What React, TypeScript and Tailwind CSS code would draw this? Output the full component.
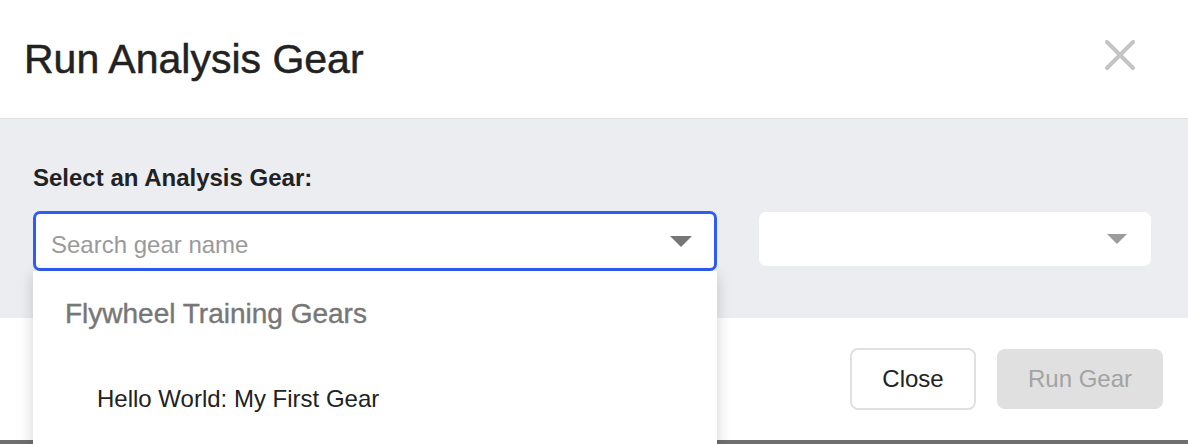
function Caret({ className }: { className: string }) {
	return (
		<svg width="22" height="11" viewBox="0 0 22 11" className={className}>
			<polygon points="0,0 22,0 11,11" fill="currentColor" />
		</svg>
	);
}

export default function App() {
	return (
		<div
			className="relative w-[1188px] h-[444px] overflow-hidden bg-white text-[#222]"
			style={{ fontFamily: '"Liberation Sans", Arial, sans-serif' }}
		>
			<div className="h-[119px] flex items-center justify-between pl-6 pr-[53px] border-b border-[#e1e1e1]">
				<h1 className="text-[41px] leading-[48px] text-[#222] [-webkit-text-stroke:0.5px_#222]">
					Run Analysis Gear
				</h1>
				<button className="mb-[8px] text-[#c4c4c4]" aria-label="Close">
					<svg width="30" height="30" viewBox="0 0 30 30">
						<path
							d="M2 2 L28 28 M28 2 L2 28"
							stroke="currentColor"
							strokeWidth="4"
							strokeLinecap="round"
						/>
					</svg>
				</button>
			</div>

			<div className="h-[199px] bg-[#ecedf1] pl-[33px] pt-[45px]">
				<p className="text-[24px] leading-[28px] font-bold text-[#222]">Select an Analysis Gear:</p>
				<div className="mt-[19px] flex items-start gap-[42px]">
					<div className="w-[684px] h-[60px] rounded-[7px] border-[3px] border-[#2f5bf6] bg-white flex items-center justify-between pl-[15px] pr-[22px]">
						<span className="text-[24px] leading-[28px] text-[#9a9a9a] pt-[7px]">Search gear name</span>
						<Caret className="text-[#777]" />
					</div>
					<div className="mt-[1px] w-[392px] h-[54px] rounded-[7px] bg-white flex items-center justify-end pr-[24px]">
						<Caret className="text-[#9c9c9c] w-[20px] h-[10px]" />
					</div>
				</div>
			</div>

			<div className="h-[122px] flex items-center justify-end gap-[21px] pr-[25px]">
				<button className="w-[126px] h-[62px] rounded-[8px] border-2 border-[#e0e0e0] bg-white text-[24px] text-[#222]">
					Close
				</button>
				<button className="w-[166px] h-[60px] rounded-[8px] bg-[#e0e0e0] text-[24px] text-[#a3a3a3]">
					Run Gear
				</button>
			</div>
			<div className="h-[4px] bg-[#6f6f6f]" />

			<div className="absolute left-[33px] top-[271px] w-[684px] h-[200px] bg-white shadow-[0_4px_14px_rgba(0,0,0,0.18)] pt-[27px]">
				<p className="pl-[32px] text-[28px] leading-[32px] text-[#777] [-webkit-text-stroke:0.4px_#777]">
					Flywheel Training Gears
				</p>
				<p className="mt-[55px] pl-[64px] text-[24px] leading-[28px] text-[#222]">Hello World: My First Gear</p>
			</div>
		</div>
	);
}
